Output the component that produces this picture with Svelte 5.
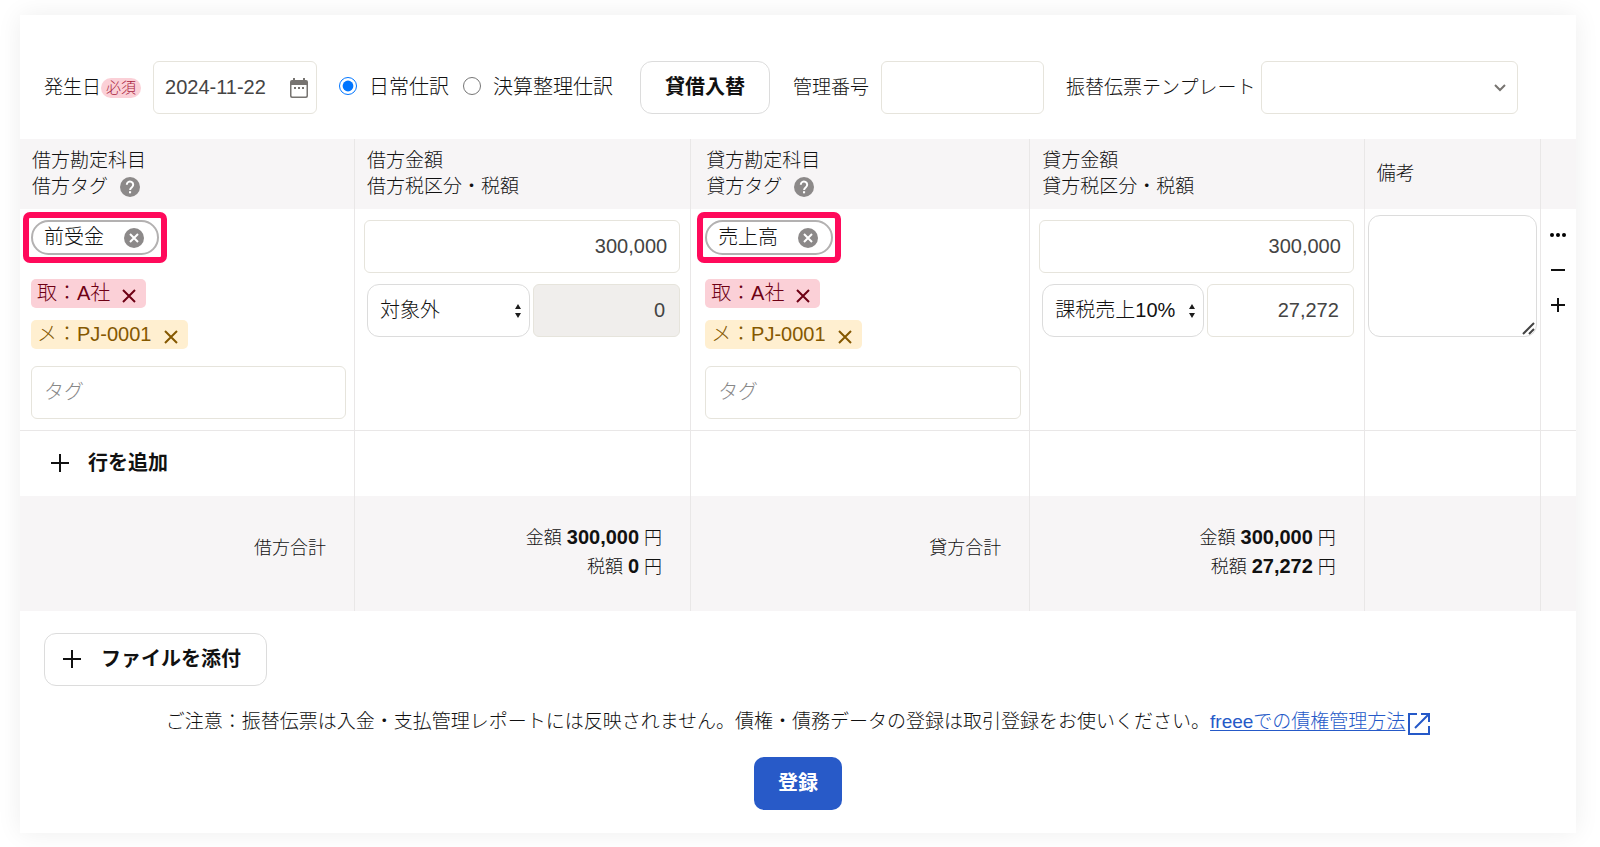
<script lang="ts">
  type Tag = { kind: string; label: string };
  type Side = {
    key: string;
    prefix: string;
    account: string;
    tags: Tag[];
    amount: string;
    taxType: string;
    tax: string;
    taxLocked: boolean;
  };

  let issueDate = $state('2024-11-22');
  let entryType = $state('daily');
  let managementNumber = $state('');
  let note = $state('');

  let sides: Side[] = $state([
    {
      key: 'debit',
      prefix: '借方',
      account: '前受金',
      tags: [
        { kind: 'partner', label: '取：A社' },
        { kind: 'memo', label: 'メ：PJ-0001' }
      ],
      amount: '300,000',
      taxType: '対象外',
      tax: '0',
      taxLocked: true
    },
    {
      key: 'credit',
      prefix: '貸方',
      account: '売上高',
      tags: [
        { kind: 'partner', label: '取：A社' },
        { kind: 'memo', label: 'メ：PJ-0001' }
      ],
      amount: '300,000',
      taxType: '課税売上10%',
      tax: '27,272',
      taxLocked: false
    }
  ]);

  function removeTag(side: Side, index: number): void {
    side.tags = side.tags.filter((_, i) => i !== index);
  }
</script>

{#snippet plus(size: number)}
  <svg width={size} height={size} viewBox="0 0 18 18" aria-hidden="true">
    <path d="M9 0v18M0 9h18" fill="none" stroke="currentColor" stroke-width="2" />
  </svg>
{/snippet}

<main class="card">
  <form onsubmit={(e) => e.preventDefault()}>
    <div class="toolbar">
      <div class="field date-field">
        <label for="issue-date">発生日</label>
        <span class="required">必須</span>
        <div class="date-box">
          <input id="issue-date" type="text" bind:value={issueDate} />
          <button type="button" class="icon-button" aria-label="カレンダー">
            <svg width="18" height="20" viewBox="0 0 18 20">
              <path
                d="M3 0h2v2h8V0h2v2h1a2 2 0 0 1 2 2v14a2 2 0 0 1-2 2H2a2 2 0 0 1-2-2V4a2 2 0 0 1 2-2h1zM1.500 7v10.500a1 1 0 0 0 1 1h13a1 1 0 0 0 1-1V7z"
                fill="#777471"
                fill-rule="evenodd"
              />
              <path d="M4 10h2M8 10h2M12 10h2" stroke="#777471" stroke-width="2" />
            </svg>
          </button>
        </div>
      </div>

      <div class="radios">
        <label>
          <input type="radio" name="entry-type" value="daily" bind:group={entryType} />
          日常仕訳
        </label>
        <label>
          <input type="radio" name="entry-type" value="closing" bind:group={entryType} />
          決算整理仕訳
        </label>
      </div>

      <button type="button" class="btn swap">貸借入替</button>

      <div class="field number-field">
        <label for="management-number">管理番号</label>
        <input id="management-number" class="box" type="text" bind:value={managementNumber} />
      </div>

      <div class="field template-field">
        <label for="template">振替伝票テンプレート</label>
        <div class="select-wrap">
          <select id="template" class="box"><option value=""></option></select>
          <svg class="chevron" width="12" height="8" viewBox="0 0 12 8" aria-hidden="true">
            <path d="M1 1l5 5 5-5" fill="none" stroke="#777471" stroke-width="2" />
          </svg>
        </div>
      </div>
    </div>

    <table>
      <colgroup>
        <col class="col-side" />
        <col class="col-amount" />
        <col class="col-credit" />
        <col class="col-side" />
        <col />
        <col class="col-actions" />
      </colgroup>
      <thead>
        <tr>
          {#each sides as side}
            <th class={side.key}>
              {side.prefix}勘定科目<br />
              <span class="with-help">
                {side.prefix}タグ
                <button type="button" class="icon-button" aria-label="ヘルプ">
                  <svg width="20" height="20" viewBox="0 0 20 20">
                    <circle cx="10" cy="10" r="10" fill="#8c8989" />
                    <path
                      d="M6.800 7.800a3.200 3.200 0 1 1 5.100 2.500c-1.200 .9-1.800 1.400-1.800 2.700"
                      fill="none"
                      stroke="#fff"
                      stroke-width="2"
                    />
                    <path d="M9 14.200h2.100v2.100H9z" fill="#fff" />
                  </svg>
                </button>
              </span>
            </th>
            <th>{side.prefix}金額<br />{side.prefix}税区分・税額</th>
          {/each}
          <th>備考</th>
          <th></th>
        </tr>
      </thead>
      <tbody>
        <tr class="entry">
          {#each sides as side}
            <td class={side.key}>
              <div class="highlight">
                <span class="account">
                  {side.account}
                  <button type="button" class="icon-button" aria-label="{side.account}を削除">
                    <svg width="20" height="20" viewBox="0 0 20 20">
                      <circle cx="10" cy="10" r="10" fill="#8c8989" />
                      <path d="M6 6l8 8M14 6l-8 8" stroke="#fff" stroke-width="2" />
                    </svg>
                  </button>
                </span>
              </div>
              <div class="tags">
                {#each side.tags as tag, index}
                  <span class="tag {tag.kind}">
                    {tag.label}
                    <button
                      type="button"
                      class="icon-button"
                      aria-label="{tag.label}を削除"
                      onclick={() => removeTag(side, index)}
                    >
                      <svg width="14" height="14" viewBox="0 0 14 14">
                        <path d="M1 1l12 12M13 1L1 13" stroke="currentColor" stroke-width="2" />
                      </svg>
                    </button>
                  </span>
                {/each}
              </div>
              <input class="box tag-input" type="text" placeholder="タグ" aria-label="{side.prefix}タグ" />
            </td>
            <td class="amount">
              <input class="box" type="text" bind:value={side.amount} aria-label="{side.prefix}金額" />
              <div class="tax">
                <div class="select-wrap">
                  <select class="box" aria-label="{side.prefix}税区分">
                    <option>{side.taxType}</option>
                  </select>
                  <svg class="updown" width="6" height="14" viewBox="0 0 6 14" aria-hidden="true">
                    <path d="M3 0l3 5H0zM3 14l3-5H0z" fill="#1d1d1d" />
                  </svg>
                </div>
                <input
                  class="box"
                  type="text"
                  bind:value={side.tax}
                  readonly={side.taxLocked}
                  aria-label="{side.prefix}税額"
                />
              </div>
            </td>
          {/each}
          <td class="note">
            <div class="note-wrap">
              <textarea bind:value={note} aria-label="備考"></textarea>
              <svg width="13" height="13" viewBox="0 0 13 13" aria-hidden="true">
                <path d="M1 12L12 1M7 12l5-5" stroke="#444" stroke-width="2" />
              </svg>
            </div>
          </td>
          <td class="actions">
            <div class="row-actions">
              <button type="button" class="icon-button" aria-label="メニュー">
                <svg width="16" height="14" viewBox="0 0 16 14">
                  <circle cx="2" cy="7" r="2" />
                  <circle cx="8" cy="7" r="2" />
                  <circle cx="14" cy="7" r="2" />
                </svg>
              </button>
              <button type="button" class="icon-button" aria-label="行を削除">
                <svg width="14" height="14" viewBox="0 0 14 14">
                  <path d="M0 7h14" stroke="currentColor" stroke-width="2" />
                </svg>
              </button>
              <button type="button" class="icon-button" aria-label="行を挿入">
                <svg width="14" height="14" viewBox="0 0 14 14">
                  <path d="M7 0v14M0 7h14" stroke="currentColor" stroke-width="2" />
                </svg>
              </button>
            </div>
          </td>
        </tr>
        <tr class="add">
          <td>
            <button type="button" class="add-row">{@render plus(18)}行を追加</button>
          </td>
          <td></td>
          <td></td>
          <td></td>
          <td></td>
          <td></td>
        </tr>
      </tbody>
      <tfoot>
        <tr>
          {#each sides as side}
            <td>{side.prefix}合計</td>
            <td class="sum">
              金額 <strong>{side.amount}</strong> 円<br />
              税額 <strong>{side.tax}</strong> 円
            </td>
          {/each}
          <td></td>
          <td></td>
        </tr>
      </tfoot>
    </table>

    <div class="footer">
      <button type="button" class="btn attach">{@render plus(18)}ファイルを添付</button>
      <p class="notice">
        <span>ご注意：振替伝票は入金・支払管理レポートには反映されません。債権・債務データの登録は取引登録をお使いください。</span>
        <a href="#help">freeeでの債権管理方法</a>
        <svg width="22" height="22" viewBox="0 0 22 22" aria-hidden="true">
          <path
            d="M9 1H1v20h20v-8M13 1h8v8M21 1L7 15"
            fill="none"
            stroke="#2559c8"
            stroke-width="2"
          />
        </svg>
      </p>
      <button type="submit" class="submit">登録</button>
    </div>
  </form>
</main>

<style>
  :global(body) {
    margin: 0;
    background: #fff;
  }

  .card {
    margin: 15px 24px 14px 20px;
    background: #fff;
    box-shadow: 0 0 24px rgba(0, 0, 0, 0.07);
    color: #111;
    font-family: 'Liberation Sans', 'Noto Sans CJK JP', sans-serif;
    font-size: 19px;
    font-weight: 300;
    line-height: 27px;
  }

  .card *,
  .card {
    box-sizing: border-box;
  }

  button,
  input,
  select,
  textarea {
    margin: 0;
    font: inherit;
    color: inherit;
  }

  button {
    cursor: pointer;
  }

  .icon-button {
    display: inline-flex;
    padding: 0;
    border: none;
    background: none;
  }

  .box {
    width: 100%;
    height: 53px;
    padding: 0 12px;
    border: 1px solid #e6e4dc;
    border-radius: 6px;
    background: #fff;
    font-size: 20px;
  }

  select.box {
    appearance: none;
  }

  .select-wrap {
    position: relative;
    flex: 1;
    min-width: 0;
  }

  .select-wrap svg {
    position: absolute;
    top: 50%;
    transform: translateY(-50%);
    pointer-events: none;
  }

  .chevron {
    right: 12px;
  }

  .updown {
    right: 9px;
  }

  /* toolbar */
  .toolbar {
    display: flex;
    align-items: center;
    padding: 46px 58px 25px 24px;
    white-space: nowrap;
  }

  .field {
    display: flex;
    align-items: center;
  }

  .required {
    padding: 0 5px;
    border-radius: 10px;
    background: #fbd0d7;
    color: #a81c3c;
    font-size: 15px;
    line-height: 20px;
  }

  .date-box {
    display: flex;
    align-items: center;
    width: 164px;
    height: 53px;
    margin-left: 12px;
    padding: 0 8px 0 11px;
    border: 1px solid #e6e4dc;
    border-radius: 6px;
  }

  .date-box input {
    flex: 1;
    min-width: 0;
    padding: 0;
    border: none;
    color: #444;
    font-size: 20px;
  }

  .radios {
    display: flex;
    gap: 14px;
    margin-left: 22px;
    font-size: 20px;
  }

  .radios label {
    display: flex;
    align-items: center;
    gap: 12px;
  }

  .radios input {
    width: 18px;
    height: 18px;
    margin-bottom: 4px;
    accent-color: #0075ff;
  }

  .btn {
    height: 53px;
    border: 1px solid #dcdcdc;
    border-radius: 12px;
    background: #fff;
    font-size: 20px;
    font-weight: 700;
  }

  .swap {
    width: 130px;
    margin-left: 27px;
    padding: 0;
  }

  .number-field {
    gap: 12px;
    margin-left: 23px;
  }

  .number-field .box {
    width: 163px;
  }

  .template-field {
    flex: 1;
    gap: 6px;
    margin-left: 22px;
  }

  /* journal table */
  table {
    width: 100%;
    border-collapse: collapse;
    table-layout: fixed;
  }

  .col-side {
    width: 21.5%;
  }

  .col-amount {
    width: 21.6%;
  }

  .col-credit {
    width: 21.8%;
  }

  .col-actions {
    width: 36px;
  }

  th,
  td {
    border-right: 1px solid #e9e7e7;
    text-align: left;
  }

  th:last-child,
  td:last-child {
    border-right: none;
  }

  th {
    height: 70px;
    padding: 0 11px 0 12px;
    background: #f7f5f6;
    font-weight: 300;
    line-height: 26px;
  }

  th.credit {
    padding-left: 15px;
  }

  .with-help {
    display: inline-flex;
    align-items: center;
    gap: 12px;
  }

  .entry td {
    height: 221px;
    padding: 11px 8px 11px 11px;
    border-bottom: 1px solid #e9e7e7;
    vertical-align: top;
  }

  .entry td.credit {
    padding-left: 14px;
  }

  .entry td.amount {
    padding-right: 10px;
    padding-left: 9px;
  }

  .highlight {
    width: fit-content;
    margin: -8px;
    padding: 2px;
    border: 6px solid #ff0a5b;
    border-radius: 7px;
  }

  .account {
    display: flex;
    align-items: center;
    gap: 20px;
    height: 35px;
    padding: 0 13px 0 11px;
    border: 2px solid #b3b1b1;
    border-radius: 18px;
    font-size: 20px;
  }

  .tags {
    display: flex;
    flex-direction: column;
    align-items: flex-start;
    gap: 12px;
    margin: 32px 0 17px;
  }

  /* the highlight frame overlaps the gap above the tags */
  .highlight + .tags {
    margin-top: 24px;
  }

  .tag {
    display: flex;
    align-items: center;
    gap: 12px;
    height: 29px;
    padding: 0 10px 0 6px;
    border-radius: 5px;
    font-size: 20px;
  }

  .tag .icon-button {
    padding-top: 4px;
  }

  .partner {
    background: #fbd0d7;
    color: #6e0014;
  }

  .memo {
    background: #ffefd0;
    color: #855800;
  }

  .tag-input {
    display: block;
  }

  .tag-input::placeholder {
    color: #888;
  }

  .amount .box {
    color: #444;
    text-align: right;
  }

  .tax {
    display: flex;
    gap: 3px;
    margin: 11px 0 0 3px;
  }

  .tax .select-wrap {
    flex: none;
    width: 52%;
  }

  .tax .select-wrap .box {
    border-color: #dcdcdc;
    border-radius: 12px;
    color: #111;
    text-align: left;
  }

  .tax > .box {
    flex: 1;
    min-width: 0;
    padding-right: 14px;
  }

  .tax > .box:read-only {
    background: #f0eeec;
  }

  .entry td.note {
    padding: 6px 3px;
  }

  .note-wrap {
    position: relative;
  }

  .note-wrap svg {
    position: absolute;
    right: 2px;
    bottom: 2px;
    pointer-events: none;
  }

  textarea {
    display: block;
    width: 100%;
    height: 122px;
    padding: 12px;
    border: 1px solid #dcdcdc;
    border-radius: 12px;
    resize: vertical;
  }

  textarea::-webkit-resizer {
    background: transparent;
  }

  .entry td.actions {
    padding: 19px 0 0;
  }

  .row-actions {
    display: flex;
    flex-direction: column;
    align-items: center;
    gap: 21px;
  }

  .add td {
    height: 65px;
    padding: 0;
  }

  .add-row {
    display: flex;
    align-items: center;
    gap: 19px;
    padding: 0 31px;
    border: none;
    background: none;
    font-size: 20px;
    font-weight: 700;
  }

  tfoot td {
    height: 115px;
    padding: 0 28px 10px;
    background: #f7f5f6;
    font-size: 18px;
    line-height: 28px;
    text-align: right;
  }

  tfoot td.sum {
    padding-bottom: 2px;
  }

  tfoot strong {
    font-size: 20px;
    font-weight: 700;
  }

  /* footer */
  .footer {
    display: flex;
    flex-direction: column;
    align-items: center;
    padding: 22px 24px 23px;
  }

  .attach {
    display: flex;
    align-items: center;
    align-self: flex-start;
    gap: 20px;
    padding: 0 25px 0 18px;
  }

  .notice {
    display: flex;
    align-items: flex-end;
    margin: 22px 0;
  }

  .notice a {
    margin-right: 3px;
    color: #2559c8;
    text-underline-offset: 2px;
  }

  .submit {
    height: 53px;
    padding: 0 24px;
    border: none;
    border-radius: 10px;
    background: #285ac8;
    color: #fff;
    font-size: 20px;
    font-weight: 700;
  }
</style>
